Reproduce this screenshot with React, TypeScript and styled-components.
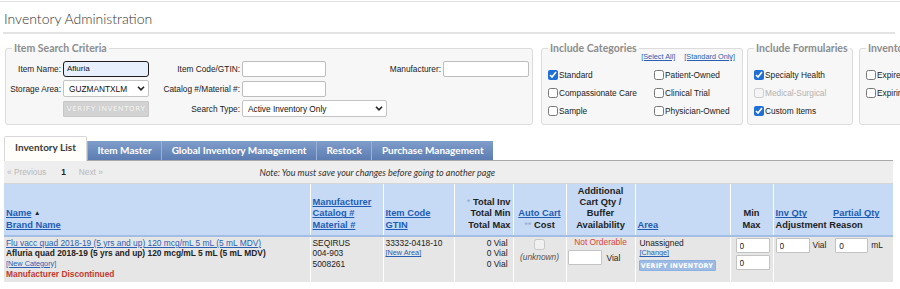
import React from "react";
import styled, { createGlobalStyle, css } from "styled-components";

const GlobalStyle = createGlobalStyle`
  html, body {
    margin: 0;
    padding: 0;
    background: #fff;
  }
  body {
    width: 900px;
    height: 289px;
    overflow: hidden;
    font-family: "Liberation Sans", Arial, sans-serif;
    font-size: 8.3px;
    color: #222;
  }
`;

const Page = styled.div`
  width: 900px;
  margin-top: 1px;
  border-top: 1px solid #e2e2e2;
`;

const Title = styled.h1`
  margin: 0 5px 0 3px;
  padding: 4px 0 0 1px;
  height: 26px;
  line-height: 26px;
  font-family: Lato, sans-serif;
  font-weight: 300;
  font-size: 14px;
  color: #333;
  border-bottom: 2px solid #e3e3e3;
`;

// ---- search criteria panels ----

const CriteriaRow = styled.div`
  display: flex;
  align-items: stretch;
  margin-top: 8px;
  white-space: nowrap;
  overflow: hidden;
`;

const Fieldset = styled.fieldset<{ $width: number; $gap: number }>`
  box-sizing: border-box;
  flex: none;
  width: ${(p) => p.$width}px;
  min-width: 0;
  margin: 0 0 0 ${(p) => p.$gap}px;
  padding: 0 3px 0 0;
  background: #f7f7f7;
  border: 1px solid #dcdcdc;
  border-radius: 3px;
`;

const Legend = styled.legend`
  margin-left: 6px;
  padding: 0 2px;
  font-family: Lato, sans-serif;
  font-weight: 700;
  font-size: 10.5px;
  line-height: 13px;
  color: #8d8d8d;
`;

const SearchGrid = styled.div`
  display: grid;
  grid-template-columns: 55px 86px 89px 84px 59px 52px 86px;
  grid-template-rows: repeat(3, 17px);
  column-gap: 2px;
  row-gap: 3px;
  margin: 5px 0 7px;
  align-items: center;
`;

const Slot = styled.div<{ $col: number; $row: number; $span?: number }>`
  grid-column: ${(p) => p.$col} / span ${(p) => p.$span ?? 1};
  grid-row: ${(p) => p.$row};
  display: flex;
  align-items: center;
`;

const FieldLabel = styled.label<{ $col: number; $row: number }>`
  grid-column: ${(p) => p.$col};
  grid-row: ${(p) => p.$row};
  text-align: right;
  color: #222;
`;

const TextInput = styled.input<{ $focused?: boolean }>`
  box-sizing: border-box;
  width: 100%;
  height: 16px;
  margin: 0;
  padding: 0 3px;
  font: 8px "Liberation Sans", Arial, sans-serif;
  color: #111;
  background: #fff;
  border: 1px solid #bdbdbd;
  border-radius: 2px;
  outline: none;
  ${(p) =>
    p.$focused &&
    css`
      background: #e8f0fe;
      border: 1.5px solid #1e1e1e;
      border-radius: 3px;
    `}
`;

const SelectWrap = styled.div`
  position: relative;
  width: 100%;
  height: 17px;
`;

const Select = styled.select`
  box-sizing: border-box;
  appearance: none;
  width: 100%;
  height: 100%;
  margin: 0;
  padding: 0 14px 0 5px;
  font: 8.3px "Liberation Sans", Arial, sans-serif;
  color: #111;
  background: #fff;
  border: 1px solid #c4c4c4;
  border-radius: 2px;
`;

const Chevron = styled.svg`
  position: absolute;
  right: 4px;
  top: 6px;
  pointer-events: none;
`;

const GreyButton = styled.button`
  box-sizing: border-box;
  width: 100%;
  height: 16px;
  margin: 0;
  padding: 0;
  font: bold 7px "DejaVu Sans", sans-serif;
  letter-spacing: 0.2px;
  color: #ededed;
  text-shadow: 0 0 1px #b3b3b3;
  background: #d3d3d3;
  border: 1px solid #c7c7c7;
  border-radius: 1px;
`;

const LinkRow = styled.div`
  display: flex;
  justify-content: flex-end;
  gap: 9px;
  height: 10px;
  margin: -3px 4px 0 0;
  font-size: 7.3px;
  line-height: 10px;
`;

const Link = styled.a`
  color: #2b5fb3;
  text-decoration: underline;
  cursor: pointer;
`;

const CheckGrid = styled.div<{ $top: number; $cols: string }>`
  display: grid;
  grid-template-columns: ${(p) => p.$cols};
  grid-auto-rows: 18px;
  align-items: center;
  margin-top: ${(p) => p.$top}px;
  padding: 0 0 4px 6px;
`;

const CheckItem = styled.label<{ $disabled?: boolean }>`
  display: flex;
  align-items: center;
  gap: 1px;
  color: ${(p) => (p.$disabled ? "#b2b2b2" : "#222")};
`;

const Check = styled.input.attrs({ type: "checkbox" })`
  width: 10px;
  height: 10px;
  margin: 0;
  accent-color: #1f6fd6;
`;

// ---- tabs + pager ----

const TabBar = styled.div`
  display: flex;
  align-items: flex-end;
  height: 24px;
  margin: 11px 7px 0 4px;
  border-bottom: 1px solid #a9a9a9;
`;

const Tab = styled.div<{ $active?: boolean }>`
  box-sizing: border-box;
  font-family: Lato, sans-serif;
  font-weight: 700;
  font-size: 10px;
  white-space: nowrap;
  ${(p) =>
    p.$active
      ? css`
          height: 25px;
          margin-bottom: -1px;
          padding: 0 10px;
          line-height: 20px;
          color: #3a3a3a;
          background: #fffefa;
          border: 1px solid #d8d8d8;
          border-bottom: none;
          border-radius: 2px 2px 0 0;
        `
      : css`
          height: 19px;
          padding: 0 9.5px;
          line-height: 19px;
          color: #fff;
          background: linear-gradient(#809dca, #5c7cb2);
          border-left: 1px solid #9bb2d6;
        `}
`;

const PagerBar = styled.div`
  height: 22px;
  margin: 0 7px 0 4px;
  background: #eeeeee;
  border-bottom: 1px solid #d6d6d6;
`;

const PagerInner = styled.div`
  display: flex;
  align-items: center;
  justify-content: space-between;
  width: 491px;
  height: 100%;
  padding-left: 3px;
  box-sizing: border-box;
`;

const PageNav = styled.div`
  display: flex;
  align-items: center;
  color: #b8b8b8;
`;

const PageNum = styled.span`
  margin: 0 13px 0 15px;
  font-weight: bold;
  color: #222;
`;

const Note = styled.span`
  font-family: Lato, sans-serif;
  font-style: italic;
  font-size: 9px;
  color: #333;
`;

// ---- inventory table ----

const Table = styled.table`
  margin: 0 0 0 4px;
  width: 889px;
  table-layout: fixed;
  border-collapse: collapse;
`;

const Th = styled.th<{ $align?: string }>`
  height: 47px;
  padding: 0 2px 4px;
  vertical-align: bottom;
  text-align: ${(p) => p.$align ?? "left"};
  font-size: 9.3px;
  line-height: 11.3px;
  font-weight: bold;
  color: #222;
  background: #c6daf6;
  border-right: 1px solid #fff;
  border-bottom: 2px solid #a3bee4;
  &:last-child {
    border-right: none;
  }
`;

const HeadLink = styled.a`
  color: #1d5db5;
  text-decoration: underline;
`;

const Star = styled.span`
  color: #8ea9d0;
  font-weight: normal;
`;

const SortArrow = styled.span`
  font-size: 6.5px;
  vertical-align: 1px;
`;

const HeadPair = styled.div`
  display: flex;
  gap: 26px;
`;

const Td = styled.td<{ $align?: string; $pad?: string }>`
  height: 44px;
  padding: ${(p) => p.$pad ?? "1px 2px 0"};
  vertical-align: top;
  text-align: ${(p) => p.$align ?? "left"};
  font-size: 8.4px;
  line-height: 10.3px;
  background: #e6e6e6;
  border-right: 1px solid #fff;
  &:last-child {
    border-right: none;
  }
`;

const Line = styled.div<{ $bold?: boolean; $tone?: string; $italic?: boolean }>`
  font-weight: ${(p) => (p.$bold ? "bold" : "normal")};
  font-style: ${(p) => (p.$italic ? "italic" : "normal")};
  color: ${(p) => p.$tone ?? "#222"};
`;

const SmallLink = styled.a`
  display: block;
  font-size: 7.3px;
  line-height: 10px;
  color: #2b5fb3;
  text-decoration: underline;
`;

const RowLink = styled.a`
  display: block;
  color: #2b5fb3;
  text-decoration: underline;
`;

const QtyInput = styled.input<{ $w: number; $lead?: number }>`
  box-sizing: border-box;
  width: ${(p) => p.$w}px;
  height: 15px;
  margin: 0 0 0 ${(p) => p.$lead ?? 0}px;
  padding: 0 3px;
  font: 8.3px "Liberation Sans", Arial, sans-serif;
  color: #222;
  background: #fff;
  border: 1px solid #c3c3c3;
  border-radius: 1px;
`;

const InlineRow = styled.div<{ $gap: number; $top?: number }>`
  display: flex;
  align-items: center;
  gap: ${(p) => p.$gap}px;
  margin-top: ${(p) => p.$top ?? 0}px;
`;

const BlueButton = styled.button`
  display: block;
  width: 77px;
  height: 11px;
  margin: 2px 0 0 -1px;
  padding: 0;
  font: bold 6.4px "DejaVu Sans", sans-serif;
  letter-spacing: 0.2px;
  color: #fff;
  background: #9dbbe4;
  border: 1px solid #8eb0de;
  border-radius: 1px;
`;

const CartCheck = styled.input.attrs({ type: "checkbox", disabled: true })`
  display: block;
  width: 11px;
  height: 11px;
  margin: 1px auto 2px;
`;

const columns = [306, 73, 71, 59, 53, 69, 95, 43, 120];

const SelectChevron = () => (
  <Chevron width="8" height="5" viewBox="0 0 8 5">
    <polyline points="1,0.8 4,3.8 7,0.8" fill="none" stroke="#222" strokeWidth="1.6" />
  </Chevron>
);

export default function App() {
  return (
    <>
      <GlobalStyle />
      <Page>
        <Title>Inventory Administration</Title>

        <CriteriaRow>
          <Fieldset $width={528} $gap={5}>
            <Legend>Item Search Criteria</Legend>
            <SearchGrid>
              <FieldLabel $col={1} $row={1}>Item Name:</FieldLabel>
              <Slot $col={2} $row={1}>
                <TextInput $focused defaultValue="Afluria" />
              </Slot>
              <FieldLabel $col={3} $row={1}>Item Code/GTIN:</FieldLabel>
              <Slot $col={4} $row={1}>
                <TextInput />
              </Slot>
              <FieldLabel $col={6} $row={1}>Manufacturer:</FieldLabel>
              <Slot $col={7} $row={1}>
                <TextInput />
              </Slot>

              <FieldLabel $col={1} $row={2}>Storage Area:</FieldLabel>
              <Slot $col={2} $row={2}>
                <SelectWrap>
                  <Select defaultValue="GUZMANTXLM">
                    <option>GUZMANTXLM</option>
                  </Select>
                  <SelectChevron />
                </SelectWrap>
              </Slot>
              <FieldLabel $col={3} $row={2}>Catalog #/Material #:</FieldLabel>
              <Slot $col={4} $row={2}>
                <TextInput />
              </Slot>

              <Slot $col={2} $row={3}>
                <GreyButton disabled>VERIFY INVENTORY</GreyButton>
              </Slot>
              <FieldLabel $col={3} $row={3}>Search Type:</FieldLabel>
              <Slot $col={4} $row={3} $span={2}>
                <SelectWrap>
                  <Select defaultValue="Active Inventory Only">
                    <option>Active Inventory Only</option>
                  </Select>
                  <SelectChevron />
                </SelectWrap>
              </Slot>
            </SearchGrid>
          </Fieldset>

          <Fieldset $width={202} $gap={8}>
            <Legend>Include Categories</Legend>
            <LinkRow>
              <Link>[Select All]</Link>
              <Link>[Standard Only]</Link>
            </LinkRow>
            <CheckGrid $top={4} $cols="106px 1fr">
              <CheckItem><Check defaultChecked />Standard</CheckItem>
              <CheckItem><Check />Patient-Owned</CheckItem>
              <CheckItem><Check />Compassionate Care</CheckItem>
              <CheckItem><Check />Clinical Trial</CheckItem>
              <CheckItem><Check />Sample</CheckItem>
              <CheckItem><Check />Physician-Owned</CheckItem>
            </CheckGrid>
          </Fieldset>

          <Fieldset $width={106} $gap={4}>
            <Legend>Include Formularies</Legend>
            <CheckGrid $top={11} $cols="1fr">
              <CheckItem><Check defaultChecked />Specialty Health</CheckItem>
              <CheckItem $disabled><Check disabled />Medical-Surgical</CheckItem>
              <CheckItem><Check defaultChecked />Custom Items</CheckItem>
            </CheckGrid>
          </Fieldset>

          <Fieldset $width={120} $gap={6}>
            <Legend>Inventory Status</Legend>
            <CheckGrid $top={11} $cols="1fr">
              <CheckItem><Check />Expired Items</CheckItem>
              <CheckItem><Check />Expiring Items</CheckItem>
            </CheckGrid>
          </Fieldset>
        </CriteriaRow>

        <TabBar>
          <Tab $active>Inventory List</Tab>
          <Tab>Item Master</Tab>
          <Tab>Global Inventory Management</Tab>
          <Tab>Restock</Tab>
          <Tab>Purchase Management</Tab>
        </TabBar>

        <PagerBar>
          <PagerInner>
            <PageNav>
              <span>« Previous</span>
              <PageNum>1</PageNum>
              <span>Next »</span>
            </PageNav>
            <Note>Note: You must save your changes before going to another page</Note>
          </PagerInner>
        </PagerBar>

        <Table>
          <colgroup>
            {columns.map((w, i) => (
              <col key={i} style={{ width: w }} />
            ))}
          </colgroup>
          <thead>
            <tr>
              <Th>
                <HeadLink>Name</HeadLink> <SortArrow>▲</SortArrow>
                <br />
                <HeadLink>Brand Name</HeadLink>
              </Th>
              <Th>
                <HeadLink>Manufacturer</HeadLink>
                <br />
                <HeadLink>Catalog #</HeadLink>
                <br />
                <HeadLink>Material #</HeadLink>
              </Th>
              <Th>
                <HeadLink>Item Code</HeadLink>
                <br />
                <HeadLink>GTIN</HeadLink>
              </Th>
              <Th $align="right">
                <Star>*</Star> Total Inv
                <br />
                Total Min
                <br />
                Total Max
              </Th>
              <Th $align="center">
                <HeadLink>Auto Cart</HeadLink>
                <br />
                <Star>**</Star> Cost
              </Th>
              <Th $align="center">
                Additional
                <br />
                Cart Qty /
                <br />
                Buffer
                <br />
                Availability
              </Th>
              <Th>
                <HeadLink>Area</HeadLink>
              </Th>
              <Th $align="center">
                Min
                <br />
                Max
              </Th>
              <Th>
                <HeadPair>
                  <HeadLink>Inv Qty</HeadLink>
                  <HeadLink>Partial Qty</HeadLink>
                </HeadPair>
                Adjustment Reason
              </Th>
            </tr>
          </thead>
          <tbody>
            <tr>
              <Td>
                <RowLink>Flu vacc quad 2018-19 (5 yrs and up) 120 mcg/mL 5 mL (5 mL MDV)</RowLink>
                <Line $bold>Afluria quad 2018-19 (5 yrs and up) 120 mcg/mL 5 mL (5 mL MDV)</Line>
                <SmallLink>[New Category]</SmallLink>
                <Line $bold $tone="#c23a2e">Manufacturer Discontinued</Line>
              </Td>
              <Td>
                <Line>SEQIRUS</Line>
                <Line>004-903</Line>
                <Line>5008261</Line>
              </Td>
              <Td>
                <Line>33332-0418-10</Line>
                <SmallLink>[New Area]</SmallLink>
              </Td>
              <Td $align="right" $pad="1px 5px 0 2px">
                <Line>0 Vial</Line>
                <Line>0 Vial</Line>
                <Line>0 Vial</Line>
              </Td>
              <Td $align="center">
                <CartCheck />
                <Line $italic $tone="#555">(unknown)</Line>
              </Td>
              <Td $align="center" $pad="0 1px">
                <Line $tone="#d9443a">Not Orderable</Line>
                <InlineRow $gap={5} $top={3}>
                  <QtyInput $w={34} />
                  <span>Vial</span>
                </InlineRow>
              </Td>
              <Td $pad="1px 3px 0 4px">
                <Line>Unassigned</Line>
                <SmallLink>[Change]</SmallLink>
                <BlueButton>VERIFY INVENTORY</BlueButton>
              </Td>
              <Td $pad="1px 3px 0 5px">
                <QtyInput $w={34} defaultValue="0" />
                <InlineRow $gap={0} $top={2}>
                  <QtyInput $w={34} defaultValue="0" />
                </InlineRow>
              </Td>
              <Td $pad="1px 2px 0 2px">
                <InlineRow $gap={3}>
                  <QtyInput $w={34} defaultValue="0" />
                  <span>Vial</span>
                  <QtyInput $w={33} $lead={6} defaultValue="0" />
                  <span>mL</span>
                </InlineRow>
              </Td>
            </tr>
          </tbody>
        </Table>
      </Page>
    </>
  );
}
